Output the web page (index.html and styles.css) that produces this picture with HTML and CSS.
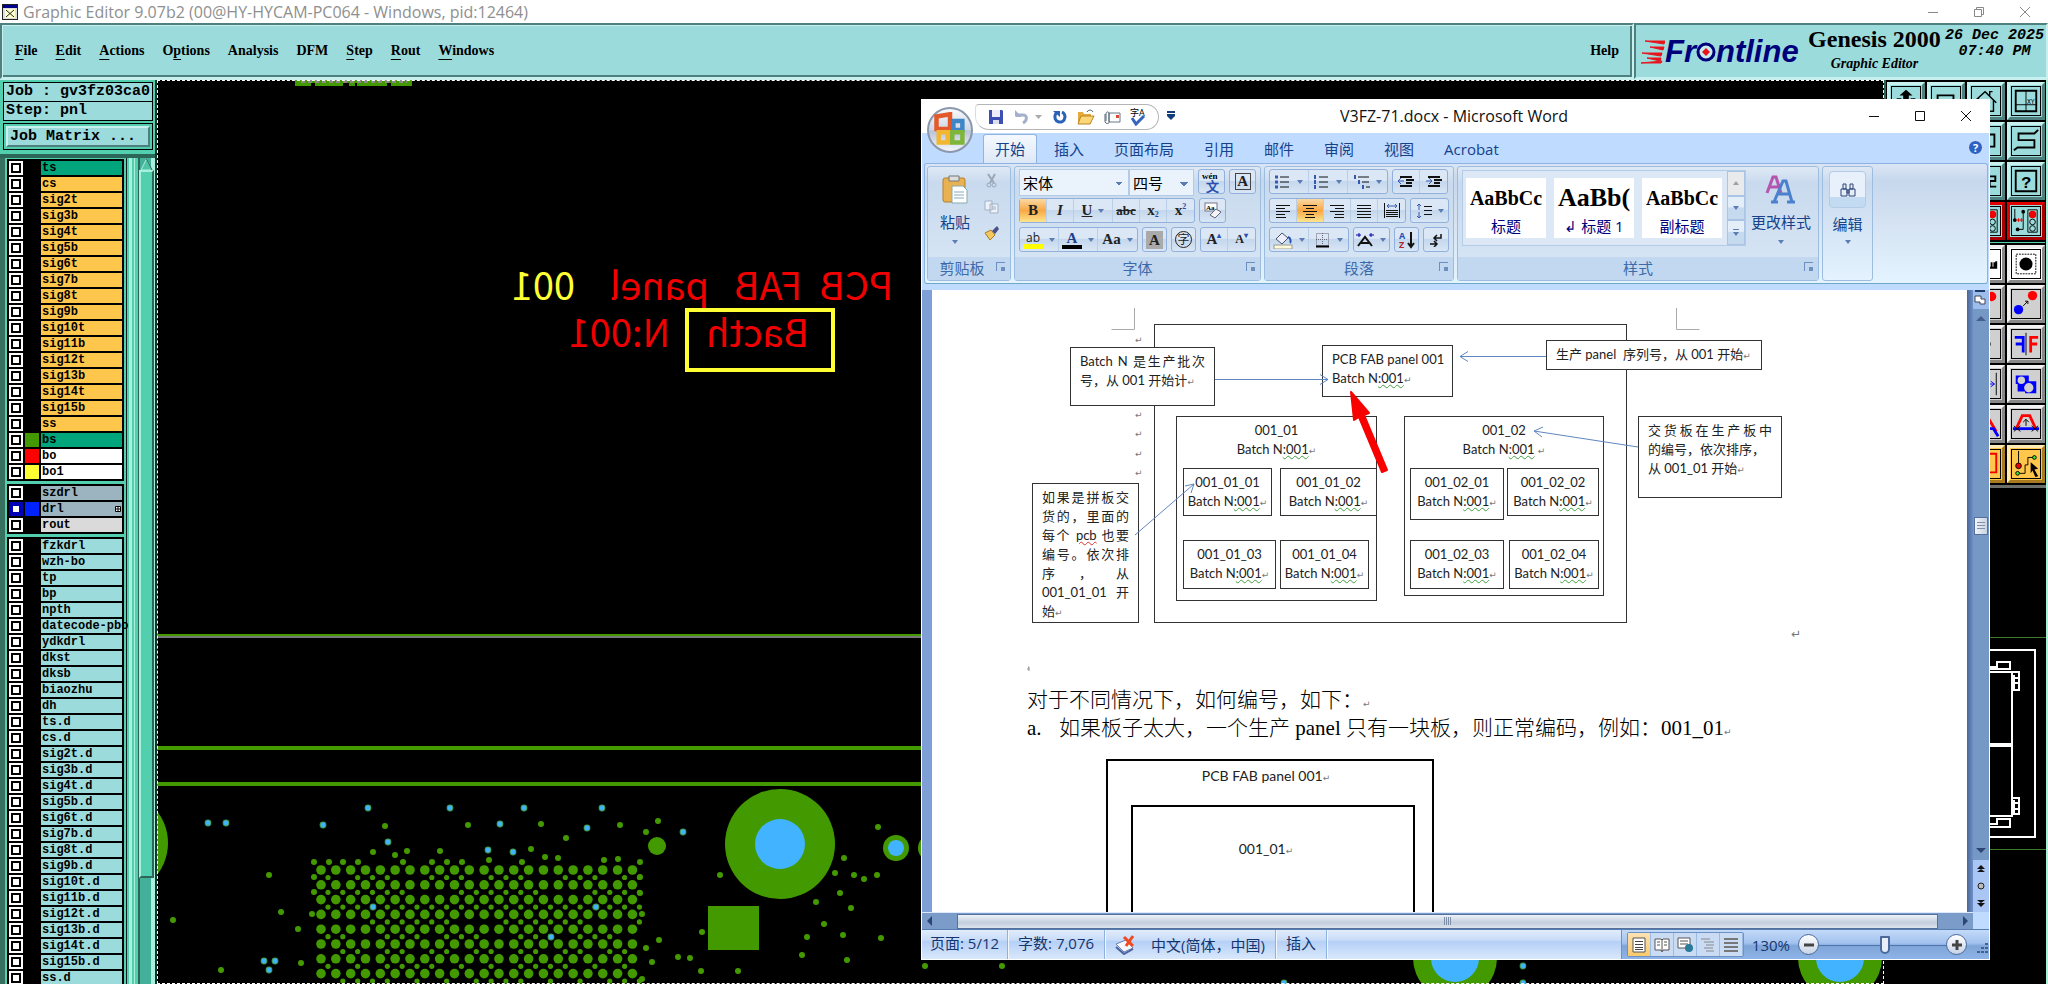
FILE: index.html
```html
<!DOCTYPE html>
<html lang="zh-CN">
<head>
    <meta charset="UTF-8">
    <meta name="viewport" content="width=device-width, initial-scale=1.0">
    <title>Graphic Editor 9.07b2</title>
    <link rel="stylesheet" href="styles.css">
</head>
<body>
    <!-- Graphic Editor -->
    <div class="editor">
        <div class="titlebar">
            <svg class="app-icon" width="16" height="16"><rect x="0.5" y="0.5" width="15" height="15" fill="#ddd" stroke="#222"/><rect x="1" y="1" width="14" height="3" fill="#008"/><rect x="3" y="5" width="10" height="9" fill="#ffc"/><path d="M4 6l8 7M12 6l-8 7" stroke="#222"/></svg>
            <span class="titlebar-text">Graphic Editor 9.07b2 (00@HY-HYCAM-PC064 - Windows, pid:12464)</span>
            <div class="win-buttons">
                <button aria-label="Minimize"><svg width="12" height="12"><path d="M1 6.500h10"/></svg></button>
                <button aria-label="Restore"><svg width="12" height="12"><path d="M1.500 3.500h7v7h-7zM3.500 3.500v-2h7v7h-2"/></svg></button>
                <button aria-label="Close"><svg width="12" height="12"><path d="M1 1l10 10M11 1L1 11"/></svg></button>
            </div>
        </div>

        <div class="topbar">
            <nav class="menubar bevel">
                <button><u>F</u>ile</button>
                <button><u>E</u>dit</button>
                <button><u>A</u>ctions</button>
                <button>O<u>p</u>tions</button>
                <button>Analysis</button>
                <button>DFM</button>
                <button><u>S</u>tep</button>
                <button><u>R</u>out</button>
                <button><u>W</u>indows</button>
                <button class="menu-help">Help</button>
            </nav>
            <div class="brand bevel">
                <div class="logo">
                    <svg width="24" height="24"><path d="M4 1h20l-1 3zM9 7h14l-1 3zM1 13h20l-1 3zM6 18h14l-1 3zM0 23h20l1-2z" fill="#e8141c" stroke="#e8141c"/></svg><span>Fr</span><svg width="20" height="20"><circle cx="10" cy="10" r="8" fill="#c8ecee" stroke="#00007b" stroke-width="3"/><path d="M10 6l4 4-4 4-4-4z" fill="#e8141c"/></svg><span>ntline</span>
                </div>
                <div class="product"><b>Genesis 2000</b><i>Graphic Editor</i></div>
                <div class="clock"><span>26 Dec 2025</span><span>07:40 PM</span></div>
            </div>
        </div>

        <div class="work">
            <aside class="sidebar">
                <div class="job-info">Job : gv3fz03ca0</div>
                <div class="job-info">Step: pnl</div>
                <div class="matrix-frame"><button class="matrix-btn">Job Matrix ...</button></div>
                <div class="layers">
                    <div class="layer-list" id="layerList"></div>
                    <div class="layer-scroll">
                        <div class="scroll-up"><svg width="15" height="14"><path d="M7.500 1L13 12H2z" fill="#4fc3a6" stroke="#a9f0dc"/><path d="M13 12L7.500 1" stroke="#22594c"/></svg></div>
                        <div class="scroll-thumb"></div>
                        <div class="scroll-rest"></div>
                    </div>
                </div>
            </aside>

            <main class="canvas">
                <svg class="board" id="board" width="100%" height="100%">
                    <g fill="#439a00">
                        <rect x="138" y="0" width="117" height="6"/>
                        <rect x="0" y="554" width="1727" height="2"/>
                        <rect x="0" y="666" width="1727" height="4"/>
                        <rect x="0" y="702" width="1727" height="4"/>
                        <rect x="551" y="826" width="51" height="44"/>
                        <circle cx="-41" cy="763" r="52"/>
                        <circle cx="500" cy="766" r="9"/>
                        <circle cx="623" cy="764" r="55"/>
                        <circle cx="739" cy="768" r="13"/>
                        <circle cx="774" cy="768" r="13"/>
                        <circle cx="1298" cy="878" r="42"/>
                        <circle cx="1683" cy="878" r="42"/>
                    </g>
                    <path d="M144 1.500h106" stroke="#8a8a8a" stroke-width="3" stroke-dasharray="4 3"/>
                    <path d="M154 4.500h4M186 4.500h6M198 4.500h2M230 4.500h4" stroke="#000" stroke-width="3"/>
                    <rect x="0" y="556" width="1727" height="2" fill="#777"/>
                    <path d="M1728.500 880v24" stroke="#3d8a80"/>
                    <g fill="#42b4ff">
                        <circle cx="623" cy="764" r="25"/>
                        <circle cx="739" cy="768" r="8"/>
                        <circle cx="1298" cy="878" r="24"/>
                        <circle cx="1683" cy="878" r="24"/>
                    </g>
                    <!-- bottom side legend reads mirrored from the top -->
                    <g class="legend" transform="scale(-1 1)">
                        <text x="-736" y="220">PCB</text>
                        <text x="-645" y="220">FAB</text>
                        <text x="-552" y="220">panel</text>
                        <text x="-418" y="220" class="serial">001</text>
                        <text x="-652" y="267">Bacth</text>
                        <text x="-513" y="267">N:001</text>
                    </g>
                    <rect x="530" y="230" width="146" height="60" fill="none" stroke="#ffff33" stroke-width="4"/>
                </svg>
            </main>

            <aside class="right">
                <div class="tools">
                    <button class="tool" aria-label="Up"><svg viewBox="0 0 30 30"><path d="M15 3l7 6h-4v6h-6V9H8zM5 12h5v14H5zM20 12h5v14h-5z" fill="#000"/></svg></button>
                    <button class="tool" aria-label="Frame"><svg viewBox="0 0 30 30"><path d="M6 9h17v14H6z" fill="none" stroke="#000" stroke-width="2"/></svg></button>
                    <button class="tool" aria-label="Home"><svg viewBox="0 0 30 30"><path d="M3 15L14 5l12 12M7 12v14h16V14M19 9V5h3" fill="none" stroke="#000" stroke-width="1.500"/></svg></button>
                    <button class="tool" aria-label="Coordinates"><svg viewBox="0 0 30 30"><path d="M4 4h22v22H4z" fill="none" stroke="#000" stroke-width="2"/><path d="M15 4v22M4 19h22" stroke="#000"/><text x="16" y="18" font-size="7">XY</text></svg></button>

                    <button class="tool c3" aria-label="Area"><svg viewBox="0 0 30 30"><path d="M8 8h16v13H8z" fill="none" stroke="#000" stroke-width="2"/></svg></button>
                    <button class="tool" aria-label="Serpentine"><svg viewBox="0 0 30 30"><path d="M28 3l-4 4H7v7h17v8H6l-4 3" fill="none" stroke="#000" stroke-width="2"/></svg></button>

                    <button class="tool c3" aria-label="Number"><svg viewBox="0 0 30 30"><path d="M18 10h7v5h-6v6h7" fill="none" stroke="#000" stroke-width="2"/></svg></button>
                    <button class="tool" aria-label="Query"><svg viewBox="0 0 30 30"><path d="M4 4h22v22H4z" fill="none" stroke="#000" stroke-width="2"/><text x="10" y="22" font-size="18" font-weight="bold">?</text></svg></button>

                    <button class="tool red c3" aria-label="Checks"><svg viewBox="0 0 30 30"><path d="M17 3h10v24H17z" fill="none" stroke="#000"/><circle cx="22" cy="8" r="4" fill="#e00"/><circle cx="22" cy="16" r="3" fill="none" stroke="#000"/><circle cx="22" cy="23" r="3" fill="none" stroke="#000"/></svg></button>
                    <button class="tool red" aria-label="Signals"><svg viewBox="0 0 30 30"><path d="M17 3h10v24H17z" fill="none" stroke="#000"/><circle cx="22" cy="8" r="4" fill="#e00"/><circle cx="22" cy="16" r="3" fill="none" stroke="#000"/><circle cx="22" cy="23" r="3" fill="none" stroke="#000"/><path d="M3 2v12M12 5v19H6" fill="none" stroke="#000"/><circle cx="3" cy="14" r="2"/><circle cx="12" cy="5" r="2"/><circle cx="6" cy="24" r="2"/><path d="M4 14h8M7 12v4M10 12v4" stroke="#e00"/></svg></button>

                    <div class="tool-gap"></div>
                    <button class="tool white c3" aria-label="Ruler"><svg viewBox="0 0 30 30"><path d="M18 12v7h8v-7M21 13v5M24 13v5" fill="none" stroke="#000" stroke-width="2"/></svg></button>
                    <button class="tool white" aria-label="Pad"><svg viewBox="0 0 30 30"><path d="M4.500 4.500h21v21h-21z" fill="none" stroke="#000" stroke-dasharray="2 1"/><circle cx="15" cy="15" r="7"/></svg></button>

                    <button class="tool gray c3" aria-label="Copy"><svg viewBox="0 0 30 30"><circle cx="21" cy="7" r="5" fill="#f00"/></svg></button>
                    <button class="tool gray" aria-label="Move"><svg viewBox="0 0 30 30"><circle cx="22" cy="6" r="5" fill="#f00"/><circle cx="7" cy="21" r="5" fill="#00f"/><path d="M12 17l5-5m-3 0h3v3" fill="none" stroke="#000"/></svg></button>

                    <button class="tool gray c3" aria-label="Rotate"><svg viewBox="0 0 30 30"><circle cx="15" cy="15" r="5"/></svg></button>
                    <button class="tool gray" aria-label="Mirror"><svg viewBox="0 0 30 30"><path d="M15 3v24" stroke="#000"/><path d="M3 8h9v16M12 15H4" fill="none" stroke="#00f" stroke-width="3"/><path d="M28 8h-8v16M20 15h7" fill="none" stroke="#f00" stroke-width="3"/></svg></button>

                    <button class="tool gray c3" aria-label="Stretch"><svg viewBox="0 0 30 30"><path d="M26 3v24" stroke="#000"/><path d="M16 15h8m-4-3l4 3-4 3" fill="none" stroke="#00f"/></svg></button>
                    <button class="tool gray" aria-label="Substitute"><svg viewBox="0 0 30 30"><path d="M4 6h14v6h8v13H14v-2H6v-8H4z" fill="#00f"/><circle cx="10" cy="11" r="4" fill="#d0d0d0"/><circle cx="18" cy="19" r="5" fill="#d0d0d0"/></svg></button>

                    <button class="tool gray c3" aria-label="Angle"><svg viewBox="0 0 30 30"><path d="M14 3l12 20" stroke="#f00" stroke-width="3"/><path d="M14 20h9l5 8" fill="none" stroke="#00f" stroke-width="3"/></svg></button>
                    <button class="tool gray" aria-label="Shift line"><svg viewBox="0 0 30 30"><path d="M1 20h28" stroke="#00f" stroke-width="3"/><path d="M5 19l6-13h8l6 13" fill="none" stroke="#f00" stroke-width="3"/><path d="M15 17v-7m-3 3l3-3 3 3M2 17l7 6M9 17l-7 6M21 17l7 6M28 17l-7 6" fill="none" stroke="#000"/></svg></button>

                    <button class="tool amber c3" aria-label="Select frame"><svg viewBox="0 0 30 30"><path d="M8 4h18v20H8z" fill="none" stroke="#e00" stroke-width="2"/></svg></button>
                    <button class="tool amber" aria-label="Select net"><svg viewBox="0 0 30 30"><path d="M7 1v13M6 25h8v-9h3V8h8" fill="none" stroke="#000"/><circle cx="7" cy="17" r="3" fill="#e00" stroke="#000"/><circle cx="6" cy="25" r="2" fill="#3e3" stroke="#000"/><circle cx="24" cy="8" r="2" fill="#3e3" stroke="#000"/><path d="M20 13l8 7-4 1 4 7-3 1-3-7-2 3z"/></svg></button>
                </div>
                <svg class="overview" width="162" height="496">
                    <path d="M0 149.500h162M0 361.500h162" stroke="#3c7a2c"/>
                    <path d="M60 162h91v187H60M100 184h28v72H100M100 258h28v70H100" fill="none" stroke="#fff" stroke-width="2"/>
                    <path d="M100 181h26v-7h-13v5h-10M100 339h26v-8h-13v5h-10" fill="none" stroke="#fff" stroke-width="2"/>
                    <path d="M129 184h6v18h-5v-15M129 310h6v16h-5v-14M130 190h5M130 195h5M130 315h5M130 321h5" fill="none" stroke="#fff" stroke-width="2"/>
                </svg>
            </aside>
        </div>
    </div>

    <!-- Word window -->
    <div class="word">
        <button class="office-btn" aria-label="Office">
            <svg width="36" height="36" viewBox="0 0 32 32"><path d="M4 4l12-2v13H4z" fill="none" stroke="#e2592a" stroke-width="4"/><path d="M19 8h8v8h-8z" fill="none" stroke="#3f86c8" stroke-width="4"/><path d="M6 18h8v9H6z" fill="none" stroke="#f2b633" stroke-width="4"/><path d="M18 18h9v9h-9z" fill="none" stroke="#7fb539" stroke-width="4"/></svg>
        </button>
        <header class="word-title">
            <div class="quick">
                <button aria-label="保存"><svg width="16" height="16"><path d="M1 1h13l1 1v13H1z" fill="#3c50b4"/><path d="M4 1h8v7H4z" fill="#eef"/><path d="M5 11h6v4H5z" fill="#dde"/></svg></button>
                <button class="wide" aria-label="撤消"><svg width="16" height="16"><path d="M3 6h6c5 0 4 6 0 8" fill="none" stroke="#a3b1cc" stroke-width="3"/><path d="M1 7V1l7 7H2z" fill="#a3b1cc"/></svg><svg width="7" height="4"><path d="M0 0h7L3.500 4z" fill="#aaa"/></svg></button>
                <button aria-label="重复"><svg width="16" height="16"><path d="M4 4c-5 9 8 13 9 4 0-2-1-4-3-5" fill="none" stroke="#2a62b8" stroke-width="3"/><path d="M1 2h7v6z" fill="#2a62b8"/></svg></button>
                <button aria-label="打开"><svg width="18" height="16"><path d="M1 3h5l1 2h7v10H1z" fill="#e5a93c"/><path d="M4 7h13l-4 8H1z" fill="#fbd77a" stroke="#b98422"/><path d="M10 3c2-3 5-2 6 0" fill="none" stroke="#456"/></svg></button>
                <button aria-label="邮件"><svg width="18" height="16"><path d="M6 4h11v9H6z" fill="#fff" stroke="#678"/><path d="M2 5v8c2 3 5 1 4-1V4c-1-2-3-1-3 1v7" fill="none" stroke="#567"/><path d="M13 6h3v3h-3z" fill="#d84a3a"/></svg></button>
                <button aria-label="拼写"><svg width="18" height="18"><text x="1" y="8" font-size="9">字A</text><path d="M3 10l4 6 8-8" fill="none" stroke="#3565c0" stroke-width="3"/></svg></button>
            </div>
            <button class="quick-more" aria-label="自定义"><svg width="8" height="10"><path d="M0 1h8M0 4h8" stroke="#123f7c" stroke-width="2"/><path d="M0 5h8L4 9z" fill="#123f7c"/></svg></button>
            <h1>V3FZ-71.docx - Microsoft Word</h1>
            <div class="win-buttons dark">
                <button aria-label="Minimize"><svg width="12" height="12"><path d="M1 6.500h10"/></svg></button>
                <button aria-label="Maximize"><svg width="12" height="12"><path d="M1.500 1.500h9v9h-9z"/></svg></button>
                <button aria-label="Close"><svg width="12" height="12"><path d="M1 1l10 10M11 1L1 11"/></svg></button>
            </div>
        </header>

        <nav class="tabs">
            <button class="active">开始</button>
            <button>插入</button>
            <button>页面布局</button>
            <button>引用</button>
            <button>邮件</button>
            <button>审阅</button>
            <button>视图</button>
            <button>Acrobat</button>
            <button class="help" aria-label="帮助">?</button>
        </nav>

        <div class="ribbon">
            <section class="group g-clip">
                <div class="group-body">
                    <button class="big">
                        <svg width="28" height="30"><rect x="2" y="4" width="22" height="24" rx="2" fill="#e8b252" stroke="#b5802a"/><path d="M8 2h10v5H8z" fill="#ddd" stroke="#777"/><path d="M11 12h11l4 4v13H11z" fill="#fff" stroke="#8aa"/><path d="M13 18h10M13 21h10M13 24h10" stroke="#8ab"/></svg>
                        粘贴<i class="arr"></i>
                    </button>
                    <div class="small-col">
                        <button aria-label="剪切"><svg width="16" height="16"><path d="M4 1l6 9M11 1L6 10" stroke="#9aa6b5" stroke-width="2"/><circle cx="5" cy="12" r="2" fill="none" stroke="#9aa6b5"/><circle cx="10" cy="12" r="2" fill="none" stroke="#9aa6b5"/></svg></button>
                        <button aria-label="复制"><svg width="16" height="16"><path d="M1 2h7v9H1zM6 5h8v9H6z" fill="#eef2f8" stroke="#9fb0c8"/><path d="M8 8h4M8 10h4" stroke="#9fb0c8"/></svg></button>
                        <button aria-label="格式刷"><svg width="16" height="16"><path d="M1 8l6-3 4 5-5 5z" fill="#f3c85c" stroke="#a57b22"/><path d="M8 6l5-5 2 3-4 5z" fill="#4a4f86"/></svg></button>
                    </div>
                </div>
                <footer>剪贴板<i class="launch"></i></footer>
            </section>

            <section class="group g-font">
                <div class="group-body rows">
                    <div class="row">
                        <div class="combos">
                            <select class="face" aria-label="字体"><option>宋体</option></select><select class="size" aria-label="字号"><option>四号</option></select>
                        </div>
                        <button class="one" aria-label="拼音指南"><svg width="20" height="22"><text x="0" y="8" font-size="9" font-weight="bold">wén</text><text x="4" y="20" font-size="13" fill="#2a50b0" font-weight="bold">文</text></svg></button>
                        <button class="one" aria-label="字符边框"><span class="boxed">A</span></button>
                    </div>
                    <div class="row">
                        <div class="seg">
                            <button class="on"><b>B</b></button><button><i>I</i></button><button class="wide"><u>U</u><i class="arr"></i></button><button><s>abc</s></button><button>x<sub>2</sub></button><button>x<sup>2</sup></button>
                        </div>
                        <button class="one" aria-label="清除格式"><svg width="18" height="18"><rect x="1" y="1" width="12" height="8" fill="#fff" stroke="#778"/><text x="2" y="8" font-size="7">Aa</text><path d="M6 13l6-6 5 3-6 6z" fill="#f4f4f8" stroke="#667"/></svg></button>
                    </div>
                    <div class="row">
                        <div class="seg">
                            <button class="wide hl"><span>ab</span><i class="arr"></i></button><button class="wide fc"><span>A</span><i class="arr"></i></button><button class="wide">Aa<i class="arr"></i></button>
                        </div>
                        <button class="one" aria-label="字符底纹"><span class="shaded">A</span></button>
                        <button class="one" aria-label="带圈字符"><span class="circled">字</span></button>
                        <div class="seg"><button>A<sup>▴</sup></button><button class="sm">A<sup>▾</sup></button></div>
                    </div>
                </div>
                <footer>字体<i class="launch"></i></footer>
            </section>

            <section class="group g-para">
                <div class="group-body rows">
                    <div class="row">
                        <div class="seg">
                            <button class="wide" aria-label="项目符号"><svg width="16" height="14"><path d="M5 2h9M5 7h9M5 12h9" stroke="#111" stroke-width="1"/><path d="M0 2h3M0 7h3M0 12h3" stroke="#3558b0" stroke-width="3"/></svg><i class="arr"></i></button>
                            <button class="wide" aria-label="编号"><svg width="16" height="14"><path d="M5 2h9M5 7h9M5 12h9" stroke="#111" stroke-width="1"/><path d="M1 0v4M1 5v4M1 10v4" stroke="#3558b0" stroke-width="2"/></svg><i class="arr"></i></button>
                            <button class="wide" aria-label="多级列表"><svg width="16" height="14"><path d="M4 2h11M8 7h7M12 12h4" stroke="#111"/><path d="M1 0v4M5 5v4M9 10v4" stroke="#3558b0" stroke-width="2"/></svg><i class="arr"></i></button>
                        </div>
                        <div class="seg">
                            <button aria-label="减少缩进"><svg width="16" height="14"><path d="M2 2h12M8 5h8M8 8h6M2 11h12" stroke="#111" stroke-width="2"/><path d="M6 6H0l3-3M0 6l3 3" fill="none" stroke="#3558b0"/></svg></button><button aria-label="增加缩进"><svg width="16" height="14"><path d="M2 2h12M8 5h8M8 8h6M2 11h12" stroke="#111" stroke-width="2"/><path d="M0 6h6L3 3M6 6L3 9" fill="none" stroke="#3558b0"/></svg></button>
                        </div>
                    </div>
                    <div class="row">
                        <div class="seg">
                            <button aria-label="左对齐"><svg width="16" height="14"><path d="M1 1.500h14M1 4.500h9M1 7.500h14M1 10.500h9M1 13.500h10" stroke="#111"/></svg></button><button class="on" aria-label="居中"><svg width="16" height="14"><path d="M1 1.500h14M4 4.500h8M1 7.500h14M4 10.500h8M3 13.500h10" stroke="#111"/></svg></button><button aria-label="右对齐"><svg width="16" height="14"><path d="M1 1.500h14M6 4.500h9M1 7.500h14M6 10.500h9M5 13.500h10" stroke="#111"/></svg></button><button aria-label="两端对齐"><svg width="16" height="14"><path d="M1 1.500h14M1 4.500h14M1 7.500h14M1 10.500h14M1 13.500h14" stroke="#111"/></svg></button><button aria-label="分散对齐"><svg width="16" height="16"><path d="M3 3h10M5 1L3 3l2 2M11 1l2 2-2 2" fill="none" stroke="#3558b0"/><path d="M.500 0v15M15.500 0v15M2 7.500h12M2 9.500h12M2 11.500h12M2 13.500h12" stroke="#111"/></svg></button>
                        </div>
                        <button class="one wide" aria-label="行距"><svg width="16" height="16"><path d="M3 1v6M1 3l2-2 2 2M3 9v6M1 13l2 2 2-2" fill="none" stroke="#3558b0"/><path d="M8 3.500h8M8 7.500h8M8 11.500h8" stroke="#111"/></svg><i class="arr"></i></button>
                    </div>
                    <div class="row">
                        <div class="seg">
                            <button class="wide" aria-label="底纹"><svg width="20" height="18"><path d="M3 8l6-6 6 5-6 6z" fill="#eef" stroke="#456"/><path d="M15 6c3 1 3 5 2 6" fill="none" stroke="#2a50b0" stroke-width="2"/><rect x="1" y="14" width="18" height="4" fill="#fffbd8" stroke="#999"/></svg><i class="arr"></i></button>
                            <button class="wide" aria-label="边框"><svg width="16" height="16"><path d="M1.500 1.500h12v12h-12zM7.500 1v12M1 7.500h12" fill="none" stroke="#667" stroke-dasharray="1 1"/><path d="M1 14.500h13" stroke="#000" stroke-width="2"/></svg><i class="arr"></i></button>
                        </div>
                        <button class="one wide" aria-label="中文版式"><svg width="18" height="16"><path d="M2 14L9 5l7 9M5 11h8" fill="none" stroke="#111" stroke-width="2"/><path d="M0 3h5M3 1v4M13 3h5M15 1v4" stroke="#00a"/></svg><i class="arr"></i></button>
                        <button class="one" aria-label="排序"><svg width="16" height="18"><text x="0" y="8" font-size="9" font-weight="bold" fill="#2a50b0">A</text><text x="0" y="17" font-size="9" font-weight="bold" fill="#b02a2a">Z</text><path d="M12 1v14m-3-3l3 4 3-4" fill="none" stroke="#111" stroke-width="2"/></svg></button>
                        <button class="one" aria-label="编辑标记"><svg width="14" height="14"><path d="M12 1v4H5m3-3L5 5l3 3M1 11h6M5 8l3 3-3 3" fill="none" stroke="#111" stroke-width="1.500"/></svg></button>
                    </div>
                </div>
                <footer>段落<i class="launch"></i></footer>
            </section>

            <section class="group g-style">
                <div class="group-body">
                    <div class="gallery">
                        <button class="style"><span>AaBbCc</span>标题</button>
                        <button class="style h1"><span>AaBb(</span>↲ 标题 1</button>
                        <button class="style"><span>AaBbCc</span>副标题</button>
                        <div class="gallery-nav"><button class="up" aria-label="上"><i class="arr"></i></button><button aria-label="下"><i class="arr"></i></button><button class="more" aria-label="更多"><i class="arr"></i></button></div>
                    </div>
                    <button class="big">
                        <svg width="32" height="30"><path d="M2 19L8 3h3l5 16M5 13h9" fill="none" stroke="#b655b0" stroke-width="3"/><path d="M9 28L18 7h3l6 21M13 20h12M6 28h7M22 28h8" fill="none" stroke="#4a80cc" stroke-width="3"/></svg>
                        更改样式<i class="arr"></i>
                    </button>
                </div>
                <footer>样式<i class="launch"></i></footer>
            </section>

            <section class="group g-edit">
                <button class="big">
                    <span class="find"><svg width="16" height="14"><path d="M3 1h3v5H3zM10 1h3v5h-3zM1 6h6v7H1zM9 6h6v7H9zM7 7h2v3H7z" fill="#e6ecf6" stroke="#2c4478"/></svg></span>
                    编辑<i class="arr"></i>
                </button>
            </section>
        </div>

        <div class="workspace">
            <div class="page">
                <div class="diagram">
                    <div class="box outer"></div>
                    <div class="box note note-batch">
                        <p class="fill">Batch N 是生产批次</p>
                        <p>号，从 001 开始计<i class="pm">↵</i></p>
                    </div>
                    <div class="box note pcb">
                        <p class="fill">PCB FAB panel 001</p>
                        <p>Batch N<u>:001</u><i class="pm">↵</i></p>
                    </div>
                    <div class="box note note-serial"><p>生产 panel&nbsp; 序列号，从 001 开始<i class="pm">↵</i></p></div>
                    <div class="box unit left-unit"><p>001_01</p><p>Batch N<u>:001</u><i class="pm">↵</i></p></div>
                    <div class="box unit right-unit"><p>001_02</p><p>Batch N<u>:001</u> <i class="pm">↵</i></p></div>
                    <div class="box unit u11"><p>001_01_01</p><p>Batch N<u>:001</u><i class="pm">↵</i></p></div>
                    <div class="box unit u12"><p>001_01_02</p><p>Batch N<u>:001</u><i class="pm">↵</i></p></div>
                    <div class="box unit u13"><p>001_01_03</p><p>Batch N<u>:001</u><i class="pm">↵</i></p></div>
                    <div class="box unit u14"><p>001_01_04</p><p>Batch N<u>:001</u><i class="pm">↵</i></p></div>
                    <div class="box unit u21"><p>001_02_01</p><p>Batch N<u>:001</u><i class="pm">↵</i></p></div>
                    <div class="box unit u22"><p>001_02_02</p><p>Batch N<u>:001</u><i class="pm">↵</i></p></div>
                    <div class="box unit u23"><p>001_02_03</p><p>Batch N<u>:001</u><i class="pm">↵</i></p></div>
                    <div class="box unit u24"><p>001_02_04</p><p>Batch N<u>:001</u><i class="pm">↵</i></p></div>
                    <div class="box note note-unit">
                        <p class="fill">交货板在生产板中</p>
                        <p>的编号，依次排序，</p>
                        <p>从 001_01 开始<i class="pm">↵</i></p>
                    </div>
                    <div class="box note note-pcb">
                        <p class="fill">如果是拼板交</p>
                        <p class="fill">货的，里面的</p>
                        <p class="fill">每个 <u class="err">pcb</u> 也要</p>
                        <p class="fill">编号。依次排</p>
                        <p class="fill">序 ， 从</p>
                        <p class="fill">001_01_01 开</p>
                        <p>始<i class="pm">↵</i></p>
                    </div>
                    <svg class="links" width="900" height="390">
                        <path d="M202.500 18v21.500h-23M744.500 18v21.500h23" fill="none" stroke="#aaa"/>
                        <path d="M283 89.500h113m-8-5l8 5-8 5M614 66.500h-86m8-5l-8 5 8 5M706 157L602 141m9-4l-9 4 8 6M203 245l59-51m-9 2l9-2-3 9" fill="none" stroke="#5f87c2"/>
                        <path d="M419 102l18 21-5 2 23 55-5 2-23-55-5 3z" fill="#f80000" stroke="#f80000" stroke-width="2" stroke-linejoin="round"/>
                        <g fill="#777" font-size="9">
                            <text x="203" y="53">↵</text><text x="203" y="128">↵</text><text x="203" y="147">↵</text><text x="203" y="167">↵</text><text x="203" y="186">↵</text><text x="859" y="348" font-size="12">↵</text>
                        </g>
                        <path d="M96 377h1v4M95 379h2" fill="none" stroke="#888"/>
                    </svg>
                </div>
                <p class="para">对于不同情况下，如何编号，如下：<i class="pm">↵</i></p>
                <p class="para item"><span>a.</span>如果板子太大，一个生产 panel 只有一块板，则正常编码，例如：001_01<i class="pm">↵</i></p>
                <div class="frame">
                    <p>PCB FAB panel 001<i class="pm">↵</i></p>
                    <div class="frame-in"><p>001_01<i class="pm">↵</i></p></div>
                </div>
            </div>
            <div class="vscroll">
                <div class="vsplit"><svg width="14" height="16"><path d="M2 1h10" stroke="#223a66" stroke-width="2"/><path d="M2 6h6v3h4v5H7v-2H2z" fill="#fff" stroke="#445"/></svg></div>
                <div class="vtrack">
                    <svg width="10" height="6"><path d="M0 6l5-5 5 5z" fill="#45608f"/></svg>
                    <div class="vthumb"></div>
                    <svg class="down" width="10" height="6"><path d="M0 0h10L5 5z" fill="#2c4674"/></svg>
                </div>
                <div class="vbrowse">
                    <svg width="8" height="8"><path d="M0 4l4-4 4 4zM0 7l4-3 4 3z" fill="#111"/></svg>
                    <svg width="8" height="8"><circle cx="4" cy="4" r="3" fill="#bbb" stroke="#222"/></svg>
                    <svg width="8" height="8"><path d="M0 1l4 3 4-3zM0 4l4 4 4-4z" fill="#111"/></svg>
                </div>
            </div>
        </div>

        <div class="hscroll">
            <svg width="6" height="10"><path d="M5 0v10L0 5z" fill="#2c4674"/></svg>
            <div class="hthumb"></div>
            <svg width="6" height="10"><path d="M1 0v10l5-5z" fill="#2c4674"/></svg>
        </div>

        <div class="status">
            <span>页面: 5/12</span>
            <span>字数: 7,076</span>
            <span class="lang"><svg width="20" height="20"><path d="M1 9l8 8 9-4-7-8z" fill="#f5f7fb" stroke="#6a7fae"/><path d="M1 12l8 7 9-5" fill="none" stroke="#4a62a0" stroke-width="2"/><path d="M9 2l9 9M18 1l-7 10" stroke="#f04a20" stroke-width="3"/></svg>中文(简体，中国)</span>
            <span>插入</span>
            <div class="status-right">
                <div class="views">
                    <button class="on" aria-label="页面视图"><svg width="16" height="16"><path d="M2 1h12v14H2z" fill="#fff" stroke="#555"/><path d="M4 4.500h8M4 7.500h8M4 10.500h8M4 12.500h8" stroke="#444"/></svg></button>
                    <button aria-label="阅读版式"><svg width="16" height="16"><path d="M1 2h6l1 1 1-1h6v11H9l-1 2-1-2H1zM8 3v11" fill="#fff" stroke="#555"/><path d="M3 5h3M3 8h3M10 5h3M10 8h3" stroke="#555"/></svg></button>
                    <button aria-label="Web 版式"><svg width="16" height="16"><path d="M1 1h12v10H1z" fill="#fff" stroke="#555"/><path d="M3 4h8M3 7h8" stroke="#555"/><circle cx="12" cy="11" r="4" fill="#2a7a9a"/></svg></button>
                    <button aria-label="大纲"><svg width="16" height="16"><path d="M1 2h9M4 5h10M6 8h8M4 11h9M6 14h8" stroke="#888"/></svg></button>
                    <button aria-label="草稿"><svg width="16" height="16"><path d="M1 2h14M1 6h14M1 10h14M1 14h14" stroke="#777" stroke-width="2"/></svg></button>
                </div>
                <label for="zoom">130%</label>
                <button class="round" aria-label="缩小"><svg width="12" height="12"><path d="M1 6h10" stroke="#444" stroke-width="3"/></svg></button>
                <input type="range" id="zoom" min="10" max="240" value="130">
                <button class="round" aria-label="放大"><svg width="12" height="12"><path d="M1 6h10M6 1v10" stroke="#444" stroke-width="3"/></svg></button>
                <svg class="grip" width="12" height="12"><path d="M9 1h3M5 5h3M9 5h3M1 9h3M5 9h3M9 9h3" stroke="#44608f" stroke-width="2"/></svg>
            </div>
        </div>
    </div>

    <script src="app.js"></script>
</body>
</html>
```
FILE: styles.css
```css
:root {
    --teal: #9bdbdb;
    --teal-dark: #4f8080;
    --teal-light: #c8f0ee;
    --green: #52cfae;
    --green-light: #a9f0dc;
    --green-dark: #2c6658;
    --word-text: #15428b;
    --word-line: #9dbde0;
    --sans: "Open Sans", "Noto Sans CJK SC", sans-serif;
    --serif: "Liberation Serif", serif;
    --mono: "Liberation Mono", monospace;
}

* {
    margin: 0;
    padding: 0;
    box-sizing: border-box;
}

body {
    height: 100vh;
    background: #000;
    overflow: hidden;
    position: relative;
}

button {
    border: none;
    background: none;
    font: inherit;
    color: inherit;
}

svg {
    display: block;
    flex: none;
}

/* Graphic Editor */
.editor {
    height: 100vh;
    display: flex;
    flex-direction: column;
}

.titlebar {
    height: 23px;
    flex: none;
    background: #fff;
    display: flex;
    align-items: center;
    gap: 5px;
    padding-left: 2px;
    font: 16px var(--sans);
    color: #8f8f8f;
}

.titlebar-text {
    flex: 1;
}

.win-buttons {
    display: flex;
}

.win-buttons button {
    width: 46px;
    display: flex;
    justify-content: center;
}

.win-buttons svg {
    fill: none;
    stroke: #888;
}

.win-buttons.dark svg {
    stroke: #111;
}

.topbar {
    height: 57px;
    flex: none;
    display: flex;
    background: var(--teal-light);
    padding-bottom: 1px;
}

.bevel {
    background: var(--teal);
    border: 2px solid var(--teal-dark);
    border-right-color: var(--teal-light);
    border-bottom-color: var(--teal-light);
    box-shadow: inset 1px 1px var(--teal-light), inset -2px -2px var(--teal-dark);
}

.menubar {
    flex: 1;
    display: flex;
    align-items: center;
    gap: 18px;
    padding: 0 13px;
    font: bold 14px var(--serif);
    color: #000;
}

.menubar u {
    text-underline-offset: 4px;
}

.menu-help {
    margin-left: auto;
}

.brand {
    width: 414px;
    display: flex;
    box-shadow: none;
    padding: 2px 2px 0 5px;
    gap: 3px;
}

.logo {
    display: flex;
    align-items: center;
    width: 164px;
    font: italic bold 31px "Liberation Sans", sans-serif;
    color: #00007b;
}

.product {
    width: 136px;
    display: flex;
    flex-direction: column;
    align-items: center;
    font: bold 14px/24px var(--serif);
}

.product b {
    font-size: 24px;
}

.product i {
    line-height: 26px;
}

.clock {
    flex: 1;
    display: flex;
    flex-direction: column;
    align-items: center;
    padding-top: 1px;
    font: italic bold 15px/16px var(--mono);
    white-space: nowrap;
}

.work {
    flex: 1;
    min-height: 0;
    display: flex;
}

.sidebar {
    width: 157px;
    flex: none;
    display: flex;
    flex-direction: column;
    background: var(--green);
    border-right: 2px solid #12352c;
    padding-top: 2px;
    font: bold 15px var(--mono);
    color: #000;
}

.job-info {
    height: 20px;
    margin: 0 2px -1px 3px;
    padding-left: 2px;
    border: 1px solid #000;
    background: var(--teal);
    line-height: 18px;
    white-space: pre;
}

.matrix-frame {
    height: 27px;
    margin: 3px 2px 4px 3px;
    padding: 2px;
    border: 1px solid #000;
}

.matrix-btn {
    width: 100%;
    height: 21px;
    padding-left: 2px;
    background: var(--teal);
    border: 2px solid var(--teal-dark);
    border-top-color: var(--teal-light);
    border-left-color: var(--teal-light);
    text-align: left;
    line-height: 16px;
}

.layers {
    flex: 1;
    min-height: 0;
    display: flex;
    overflow: hidden;
    border-top: 4px solid var(--green-dark);
}

.layer-list {
    width: 124px;
    border-left: 5px solid #38705f;
    padding: 1px 0 0 2px;
    position: relative;
    z-index: 1;
}

.layer-group {
    background: #000;
    margin-bottom: 3px;
    padding: 2px;
    display: flex;
    flex-direction: column;
    gap: 2px;
}

.layer {
    height: 14px;
    display: flex;
    gap: 2px;
    font-size: 12px;
    line-height: 14px;
}

.layer input {
    appearance: none;
    width: 14px;
    height: 14px;
    flex: none;
    background: #fff;
    box-shadow: inset 0 0 0 2px #fff, inset 0 0 0 4px #000;
}

.layer input:checked {
    box-shadow: inset 0 0 0 4px #0000b4;
}

.swatch {
    width: 14px;
    flex: none;
}

.layer label {
    flex: 1;
    padding-left: 1px;
    white-space: nowrap;
    display: flex;
    min-width: 0;
}

.layer label svg {
    margin: 4px 1px 0 auto;
}

.swatch.lime { background: #439a00; }
.swatch.red { background: #f00; }
.swatch.yellow { background: #ff3; }
.swatch.blue { background: #0022ff; }
.t-mask { background: #00a57c; }
.t-signal { background: #ffc64c; }
.t-white { background: #fff; }
.t-drill { background: #9bb4bf; }
.t-rout { background: #dadada; }
.t-doc { background: var(--teal); }

.layer-scroll {
    flex: 1;
    display: flex;
    flex-direction: column;
    padding: 0 2px 0 15px;
    background: linear-gradient(to right, #52cfae 2px, #122 2px 3px, #52cfae 3px 5px, #a9f0dc 5px 8px, #52cfae 8px 10px, #a9f0dc 10px 11px, #52cfae 11px 14px, #2c6658 14px 16px, #43b09a 16px 27px, #a9f0dc 27px);
}

.scroll-up {
    height: 12px;
    overflow: hidden;
}

.scroll-thumb {
    height: 708px;
    background: var(--green);
    border: 2px solid var(--green-dark);
    border-top-color: var(--green-light);
    border-left-color: var(--green-light);
}

.canvas {
    flex: 1;
    min-width: 0;
    outline: 1px dashed #fff;
    outline-offset: -1px;
    overflow: hidden;
}

.legend {
    font: 400 38px "Noto Sans CJK SC", sans-serif;
    fill: #f00000;
}

.legend .serial {
    fill: #ffff33;
}

.right {
    width: 164px;
    flex: none;
    border-right: 2px solid var(--green-light);
}

.tools {
    display: grid;
    grid-template-columns: repeat(4, 38px);
    gap: 2px;
    padding: 2px 1px;
    background: #000;
    border-left: 2px solid var(--green-dark);
    border-bottom: 3px solid #6a6f6c;
}

.tool {
    height: 38px;
    background: var(--teal);
    border: 3px solid var(--teal-dark);
    border-top-color: var(--teal-light);
    border-left-color: var(--teal-light);
}

.tool svg {
    width: 30px;
    height: 30px;
    margin: 1px;
    border: 1px solid #000;
    font-family: var(--mono);
}

.tool.c3 { grid-column: 3; }
.tool.red { border-color: #e00000 #a80000 #a80000 #e00000; }
.tool.white { background: #fff; border-color: #eee #888 #888 #eee; }
.tool.gray { background: #d0d0d0; border-color: #f2f2f2 #888 #888 #f2f2f2; }
.tool.amber { background: #ffc64c; border-color: #ffe9b4 #a87b20 #a87b20 #ffe9b4; }

.tool-gap {
    grid-column: 1 / -1;
    height: 1px;
    background: var(--green);
}

/* Word */
.word {
    position: absolute;
    left: 921px;
    top: 99px;
    right: 58px;
    bottom: 24px;
    display: flex;
    flex-direction: column;
    background: #bfdbff;
    border: 1px solid #fff;
    border-top: none;
    font: 15px var(--sans);
    color: var(--word-text);
}

.word button {
    display: flex;
    align-items: center;
    justify-content: center;
}

.office-btn {
    position: absolute;
    left: 5px;
    top: 8px;
    width: 46px;
    height: 46px;
    border: 2px solid #8a97ad;
    border-radius: 50%;
    background: linear-gradient(#f8f9fc, #cfd6e4 50%, #b9c3d8 52%, #f2f5fb);
    z-index: 2;
}

.word-title {
    height: 34px;
    flex: none;
    display: flex;
    align-items: center;
    background: #fff;
}

.quick {
    display: flex;
    align-items: center;
    height: 26px;
    width: 184px;
    margin-left: 53px;
    margin-top: 2px;
    padding-left: 7px;
    border: 1px solid #b5b5b5;
    border-left-color: #ddd;
    border-radius: 4px 13px 13px 14px;
}

.quick button {
    width: 26px;
    height: 20px;
    gap: 5px;
}

.quick .wide {
    width: 38px;
}

.quick-more {
    width: 24px;
}

.word-title h1 {
    flex: 1;
    font-size: 16px;
    font-weight: normal;
    color: #111;
    padding-left: 157px;
}

.tabs {
    height: 30px;
    flex: none;
    display: flex;
    padding: 1px 6px 0 61px;
}

.tabs button {
    padding: 0 15px;
    line-height: 26px;
}

.tabs .active {
    padding: 0 11px;
    margin-right: 2px;
    background: linear-gradient(#f5f9fe, #dce8f6);
    border: 1px solid #8fb4e0;
    border-bottom: none;
    border-radius: 3px 3px 0 0;
}

.tabs .help {
    width: 15px;
    height: 15px;
    margin: 6px 0 0 auto;
    padding: 0;
    border-radius: 50%;
    background: #2b62c4;
    border: 1px solid #dce9fb;
    color: #fff;
    font-size: 11px;
    font-weight: bold;
    line-height: 12px;
}

.ribbon {
    flex: none;
    height: 121px;
    display: flex;
    gap: 3px;
    margin: 0 1px 6px 2px;
    padding: 2px;
    border: 1px solid #8db2e3;
    border-bottom-color: #6fa8c8;
    border-radius: 3px;
    background: linear-gradient(#dbe6f4, #c7d8ed 16px, #d5e3f2 60px, #e3f4ff);
}

.group {
    display: flex;
    flex-direction: column;
    border: 1px solid var(--word-line);
    border-radius: 3px;
    background: linear-gradient(#dfe9f5, #c9daee 16px, #d9e7f5);
}

.group-body {
    flex: 1;
    min-height: 0;
    display: flex;
    padding: 2px 4px 0;
}

.group footer {
    height: 23px;
    flex: none;
    background: #c1d8f0;
    color: #3e6aaa;
    text-align: center;
    line-height: 22px;
    position: relative;
}

.g-clip footer {
    padding-right: 14px;
}

.launch {
    position: absolute;
    right: 5px;
    top: 5px;
    width: 9px;
    height: 9px;
    border-top: 1px solid #6c8fc0;
    border-left: 1px solid #6c8fc0;
    background: linear-gradient(#6c8fc0, #6c8fc0) 100% 100% / 4px 4px no-repeat;
}

.arr {
    flex: none;
    border: 3px solid transparent;
    border-top: 4px solid #5a7db3;
    border-bottom: none;
}

.g-clip { width: 84px; }
.g-font { width: 247px; }
.g-para { width: 190px; }
.g-style { width: 362px; }
.g-edit { width: 51px; background: linear-gradient(#dfe9f5, #c9daee 16px, #e3f2fe); }

.big {
    flex-direction: column;
    gap: 8px;
    padding: 5px 0 0;
    line-height: 20px;
    white-space: nowrap;
}

.word .big {
    justify-content: flex-start;
}

.g-clip .big {
    width: 50px;
}

.g-style .big {
    width: 66px;
    margin-left: 2px;
}

.g-edit .big {
    padding-top: 4px;
    gap: 6px;
}

.find {
    width: 37px;
    height: 37px;
    display: flex;
    align-items: center;
    justify-content: center;
    border: 1px solid #b4cbe8;
    border-radius: 4px;
    background: linear-gradient(#e8f1fb 70%, #c3dbf0 72%);
}

.small-col {
    display: flex;
    flex-direction: column;
    gap: 10px;
    padding: 4px 6px;
}

.rows {
    flex-direction: column;
    gap: 4px;
}

.row {
    height: 25px;
    display: flex;
    gap: 4px;
}

.combos {
    display: flex;
    width: 176px;
}

.combos select {
    appearance: none;
    flex: 1;
    height: 27px;
    padding-left: 3px;
    border: 1px solid #b4cbe8;
    background:
        linear-gradient(45deg, transparent 50%, #5a7db3 50%) calc(100% - 9px) 12px / 4px 4px no-repeat,
        linear-gradient(-45deg, transparent 50%, #5a7db3 50%) calc(100% - 5px) 12px / 4px 4px no-repeat,
        #eaf2fb;
    font: 15px var(--sans);
    color: #000;
}

.combos .face {
    flex: 0 0 110px;
}

.seg {
    display: flex;
    border: 1px solid #91b0db;
    border-radius: 3px;
    background: linear-gradient(#dbe7f5 45%, #c5d7ed 50%, #d8e6f5);
}

.seg button {
    width: 27px;
    border-right: 1px solid #b9cfe8;
}

.seg button:last-child {
    border-right: none;
}

.seg .wide,
.word .one.wide {
    width: 39px;
    gap: 6px;
}

.seg .on {
    background: linear-gradient(#fbd9a4, #f8a845 50%, #fde58c);
}

.one {
    width: 27px;
    border: 1px solid #91b0db;
    border-radius: 3px;
    background: linear-gradient(#dbe7f5 45%, #c5d7ed 50%, #d8e6f5);
}

.g-font .seg,
.g-font .one {
    font: bold 15px var(--serif);
    color: #222;
}

.g-font sub,
.g-font sup {
    font-size: 8px;
    color: #2a50b0;
    align-self: flex-start;
    padding-top: 3px;
}

.g-font sub {
    align-self: flex-end;
    padding-bottom: 3px;
}

.g-font s {
    font-size: 13px;
}

.g-font .sm {
    font-size: 12px;
}

.boxed {
    width: 16px;
    line-height: 15px;
    border: 1px solid #444;
}

.shaded {
    width: 17px;
    line-height: 18px;
    background: #aaa;
}

.circled {
    width: 17px;
    height: 17px;
    border: 1px solid #222;
    border-radius: 50%;
    font: 12px/15px var(--sans);
}

.hl span {
    font: 12px/13px var(--sans);
    border-bottom: 5px solid #ff0;
    width: 20px;
}

.fc span {
    line-height: 14px;
    border-bottom: 4px solid #000;
    width: 20px;
    color: #1f3f8a;
}

.gallery {
    height: 76px;
    display: flex;
    gap: 8px;
    padding: 7px 0 7px 3px;
    border: 1px solid #b4cbe8;
    background: #dce8f6;
    margin-top: 1px;
}

.word .style {
    width: 80px;
    height: 60px;
    flex-direction: column;
    justify-content: space-between;
    padding: 4px 2px 0;
    background: #fff;
    color: #00007b;
    line-height: 24px;
}

.style span {
    white-space: nowrap;
    font: bold 20px/32px var(--serif);
    color: #000;
}

.style.h1 span {
    font-size: 26px;
}

.gallery-nav {
    width: 18px;
    margin: -7px 0 -7px -3px;
    display: flex;
    flex-direction: column;
}

.gallery-nav button {
    flex: 1;
    border: 1px solid #a9c4e4;
    background: linear-gradient(#e4eef9 45%, #c5d9ef 50%);
}

.gallery-nav .up {
    background: #e8eaec;
}

.gallery-nav .up .arr {
    border: 3px solid transparent;
    border-top: none;
    border-bottom: 4px solid #a0a0a0;
}

.word .gallery-nav .more {
    flex-direction: column;
    gap: 2px;
}

.gallery-nav .more::before {
    content: "";
    width: 6px;
    height: 1px;
    background: #5a7db3;
}

/* Document */
.workspace {
    flex: 1;
    min-height: 0;
    display: flex;
    padding-left: 10px;
    background: linear-gradient(to right, #7ea0d6, #5f87c4);
}

.page {
    flex: 1;
    min-width: 0;
    display: flex;
    flex-direction: column;
    overflow: hidden;
    background: #fff;
    color: #000;
}

.diagram {
    height: 396px;
    flex: none;
    position: relative;
    font: 13px/19px Lato, "Noto Sans CJK SC", sans-serif;
    color: #222;
}

.box {
    position: absolute;
    border: 1px solid #333;
    background: #fff;
    padding: 4px 9px;
    white-space: nowrap;
}

.unit {
    text-align: center;
    padding: 4px 0;
}

.fill {
    text-align: justify;
    text-align-last: justify;
}

.box u {
    text-decoration: underline wavy #3fa03f 1px;
    text-underline-offset: 1px;
}

.box u.err {
    text-decoration-color: #e03030;
}

.pm {
    font: 9px "DejaVu Sans", sans-serif;
    color: #777;
}

.links {
    position: absolute;
    left: 0;
    top: 0;
    font-family: "DejaVu Sans", sans-serif;
}

.outer { left: 222px; top: 34px; width: 473px; height: 299px; }
.note-batch { left: 138px; top: 57px; width: 145px; height: 59px; }
.pcb { left: 390px; top: 55px; width: 131px; height: 52px; }
.note-serial { left: 614px; top: 50px; width: 216px; height: 30px; }
.left-unit { left: 244px; top: 126px; width: 201px; height: 185px; }
.right-unit { left: 472px; top: 126px; width: 200px; height: 180px; }
.u11 { left: 251px; top: 178px; width: 89px; height: 48px; }
.u12 { left: 348px; top: 178px; width: 97px; height: 48px; }
.u13 { left: 251px; top: 250px; width: 93px; height: 49px; }
.u14 { left: 348px; top: 250px; width: 89px; height: 49px; }
.u21 { left: 478px; top: 178px; width: 94px; height: 52px; }
.u22 { left: 575px; top: 178px; width: 92px; height: 48px; }
.u23 { left: 478px; top: 250px; width: 94px; height: 49px; }
.u24 { left: 577px; top: 250px; width: 90px; height: 49px; }
.note-unit { left: 706px; top: 126px; width: 144px; height: 82px; }
.note-pcb { left: 100px; top: 193px; width: 107px; height: 140px; }

.para {
    margin-left: 95px;
    font: 300 21px/28px "Liberation Serif", "Noto Sans CJK SC", serif;
    white-space: nowrap;
}

.item span {
    display: inline-block;
    width: 32px;
}

.frame {
    flex: 1;
    display: flex;
    flex-direction: column;
    width: 328px;
    margin: 17px 0 0 174px;
    border: 2px solid #000;
    border-bottom: none;
    padding: 5px 17px 0 23px;
    font: 14px/19px Lato, sans-serif;
    text-align: center;
    color: #222;
}

.frame p {
    padding-right: 14px;
}

.frame-in {
    flex: 1;
    margin-top: 20px;
    padding-top: 32px;
    border: 2px solid #000;
    border-bottom: none;
}

.vscroll {
    width: 22px;
    flex: none;
    display: flex;
    flex-direction: column;
    padding-left: 6px;
    background: linear-gradient(to right, #4a6696, #6d90c8 6px, #9dbdec 6px);
}

.vsplit {
    height: 19px;
}

.vtrack {
    flex: 1;
    display: flex;
    flex-direction: column;
    align-items: center;
    padding: 6px 0;
    background: #7698c4;
}

.vthumb {
    width: 14px;
    height: 18px;
    margin-top: 196px;
    border: 1px solid #56709e;
    background: repeating-linear-gradient(#8090a8 0 1px, transparent 1px 3px) center / 8px 9px no-repeat, linear-gradient(to right, #f2f5fa, #c9d3e2);
}

.vtrack .down {
    margin-top: auto;
}

.vbrowse {
    height: 52px;
    display: flex;
    flex-direction: column;
    align-items: center;
    justify-content: space-around;
    background: #a9c6f5;
}

.hscroll {
    height: 17px;
    flex: none;
    display: flex;
    align-items: center;
    gap: 24px;
    margin-right: 16px;
    padding: 0 5px;
    background: #7b9bc9;
    border-top: 1px solid #dce9fb;
}

.hthumb {
    flex: 1;
    height: 15px;
    border: 1px solid #56709e;
    background: repeating-linear-gradient(to right, #7f8fa8 0 1px, transparent 1px 2px) center / 8px 8px no-repeat, linear-gradient(#eef2f8, #c3cddd 60%, #dde4ee);
}

.status {
    height: 30px;
    flex: none;
    display: flex;
    border-top: 1px solid #567db0;
    background: linear-gradient(#e1ecfb, #c8dcf8 35%, #b5d0f7 40%, #d9e8fb);
    line-height: 26px;
    color: #15356e;
}

.status > span {
    padding: 0 8px;
    border-right: 1px solid #8fb1de;
    box-shadow: 1px 0 #f2f7fe;
}

.status > span + span {
    padding: 0 10px;
}

.lang {
    display: flex;
    align-items: center;
    gap: 16px;
}

.status-right {
    margin-left: auto;
    display: flex;
    align-items: center;
    padding-left: 5px;
    border-left: 1px solid #6c93c8;
    background: linear-gradient(#c3daf9, #a3c2ee 45%, #7fa5d8 55%, #8db3e8);
}

.views {
    display: flex;
    height: 25px;
    border: 1px solid #6d91c4;
    border-radius: 2px;
    background: #c9dcf4;
}

.views button {
    width: 23px;
    border-right: 1px solid #9cbbe3;
}

.views .on {
    background: linear-gradient(#fbe2b4, #f9c96c);
}

.status label {
    padding: 0 8px;
}

.round {
    width: 21px;
    height: 21px;
    border: 1px solid #4b6a9c;
    border-radius: 50%;
    background: linear-gradient(#fff, #c7d3e6);
}

.status-right input {
    appearance: none;
    width: 127px;
    height: 20px;
    background: linear-gradient(#4f75b0, #4f75b0) 0 10px / 100% 1px no-repeat;
}

.status-right input::-webkit-slider-thumb {
    appearance: none;
    width: 10px;
    height: 18px;
    background: #e7eefa;
    border: 2px solid #4b6a9c;
    border-radius: 1px 1px 5px 5px;
}

.grip {
    margin: 8px 1px 0 9px;
}
```
FILE: app.js
```js
// Layer table: [name, colour class, swatch]
const groups = [
    [
        ['ts', 't-mask'], ['cs', 't-signal'],
        ...['2t', '3b', '4t', '5b', '6t', '7b', '8t', '9b', '10t', '11b', '12t', '13b', '14t', '15b'].map(n => ['sig' + n, 't-signal']),
        ['ss', 't-signal'], ['bs', 't-mask', 'lime'], ['bo', 't-white', 'red'], ['bo1', 't-white', 'yellow']
    ],
    [['szdrl', 't-drill'], ['drl', 't-drill', 'blue'], ['rout', 't-rout']],
    [
        ...['fzkdrl', 'wzh-bo', 'tp', 'bp', 'npth', 'datecode-pbo', 'ydkdrl', 'dkst', 'dksb', 'biaozhu', 'dh', 'ts.d', 'cs.d'].map(n => [n, 't-doc']),
        ...['2t', '3b', '4t', '5b', '6t', '7b', '8t', '9b', '10t', '11b', '12t', '13b', '14t', '15b'].map(n => ['sig' + n + '.d', 't-doc']),
        ['ss.d', 't-doc']
    ]
];

const list = document.getElementById('layerList');
groups.forEach(rows => {
    const group = document.createElement('div');
    group.className = 'layer-group';
    group.innerHTML = rows.map(([name, type, swatch]) => `
        <div class="layer">
            <input type="checkbox" id="l-${name}" ${name === 'drl' ? 'checked' : ''}>
            <span class="swatch ${swatch || ''}"></span>
            <label class="${type}" for="l-${name}">${name}${name === 'drl' ? '<svg width="6" height="6"><path d="M.5.5h5v5h-5zM3 0v6M0 3h6" fill="#fff" stroke="#000"/></svg>' : ''}</label>
        </div>`).join('');
    list.appendChild(group);
});

// Board pads, screen coordinates shifted to the canvas origin
const OX = 157, OY = 80;
const board = document.getElementById('board');
const NS = 'http://www.w3.org/2000/svg';

function dot(x, y, r, fill) {
    const c = document.createElementNS(NS, 'circle');
    c.setAttribute('cx', x - OX);
    c.setAttribute('cy', y - OY);
    c.setAttribute('r', r);
    c.setAttribute('fill', fill);
    board.appendChild(c);
}

const drilled = [[368,808],[450,808],[524,808],[602,808],[208,823],[226,823],[323,825],[500,824],[587,828],[683,832],[388,842],[488,850],[513,852],[264,961],[275,961],[269,970],[1284,983],[1523,966],[1523,983]];
const inGrid = [[373,907],[596,907],[551,937]];
const vias = [[385,826],[468,825],[541,824],[620,825],[658,821],[646,832],[566,838],[373,852],[407,851],[395,855],[440,851],[531,849],[545,857],[558,858],[489,860],[522,862],[604,860],[618,859],[640,862],[720,875],[269,875],[281,912],[173,920],[298,929],[301,963],[221,970],[312,914],[642,914],[659,940],[646,948],[652,962],[678,957],[690,958],[702,932],[701,971],[738,971],[642,979],[807,937],[802,955],[824,924],[816,902],[840,893],[835,873],[844,858],[854,875],[864,879],[877,875],[878,827],[851,908],[843,935],[881,938],[847,960],[925,966],[1002,966]];

vias.forEach(([x, y]) => dot(x, y, 3, '#439a00'));

// BGA field
for (let row = 0; row < 8; row++) {
    for (let col = 0; col < 22; col++) {
        const x = 321 + col * 14.83, y = 870 + row * 14.8;
        dot(x, y, 4.8, '#439a00');
        if ((col * 7 + row * 5 + col * row) % 9 < 6) {
            dot(x + 7, y + 7.5, 2.6, '#439a00');
        }
    }
}
[314, 329, 343, 358, 403, 432, 447, 462].forEach(x => dot(x, 862, 3, '#439a00'));
[877, 892].forEach(y => dot(314, y, 3, '#439a00'));
[877, 893].forEach(y => dot(640, y, 3, '#439a00'));

drilled.concat(inGrid).forEach(([x, y]) => {
    dot(x, y, 3.4, '#3f9a50');
    dot(x, y, 2.4, '#42b4ff');
});
```
